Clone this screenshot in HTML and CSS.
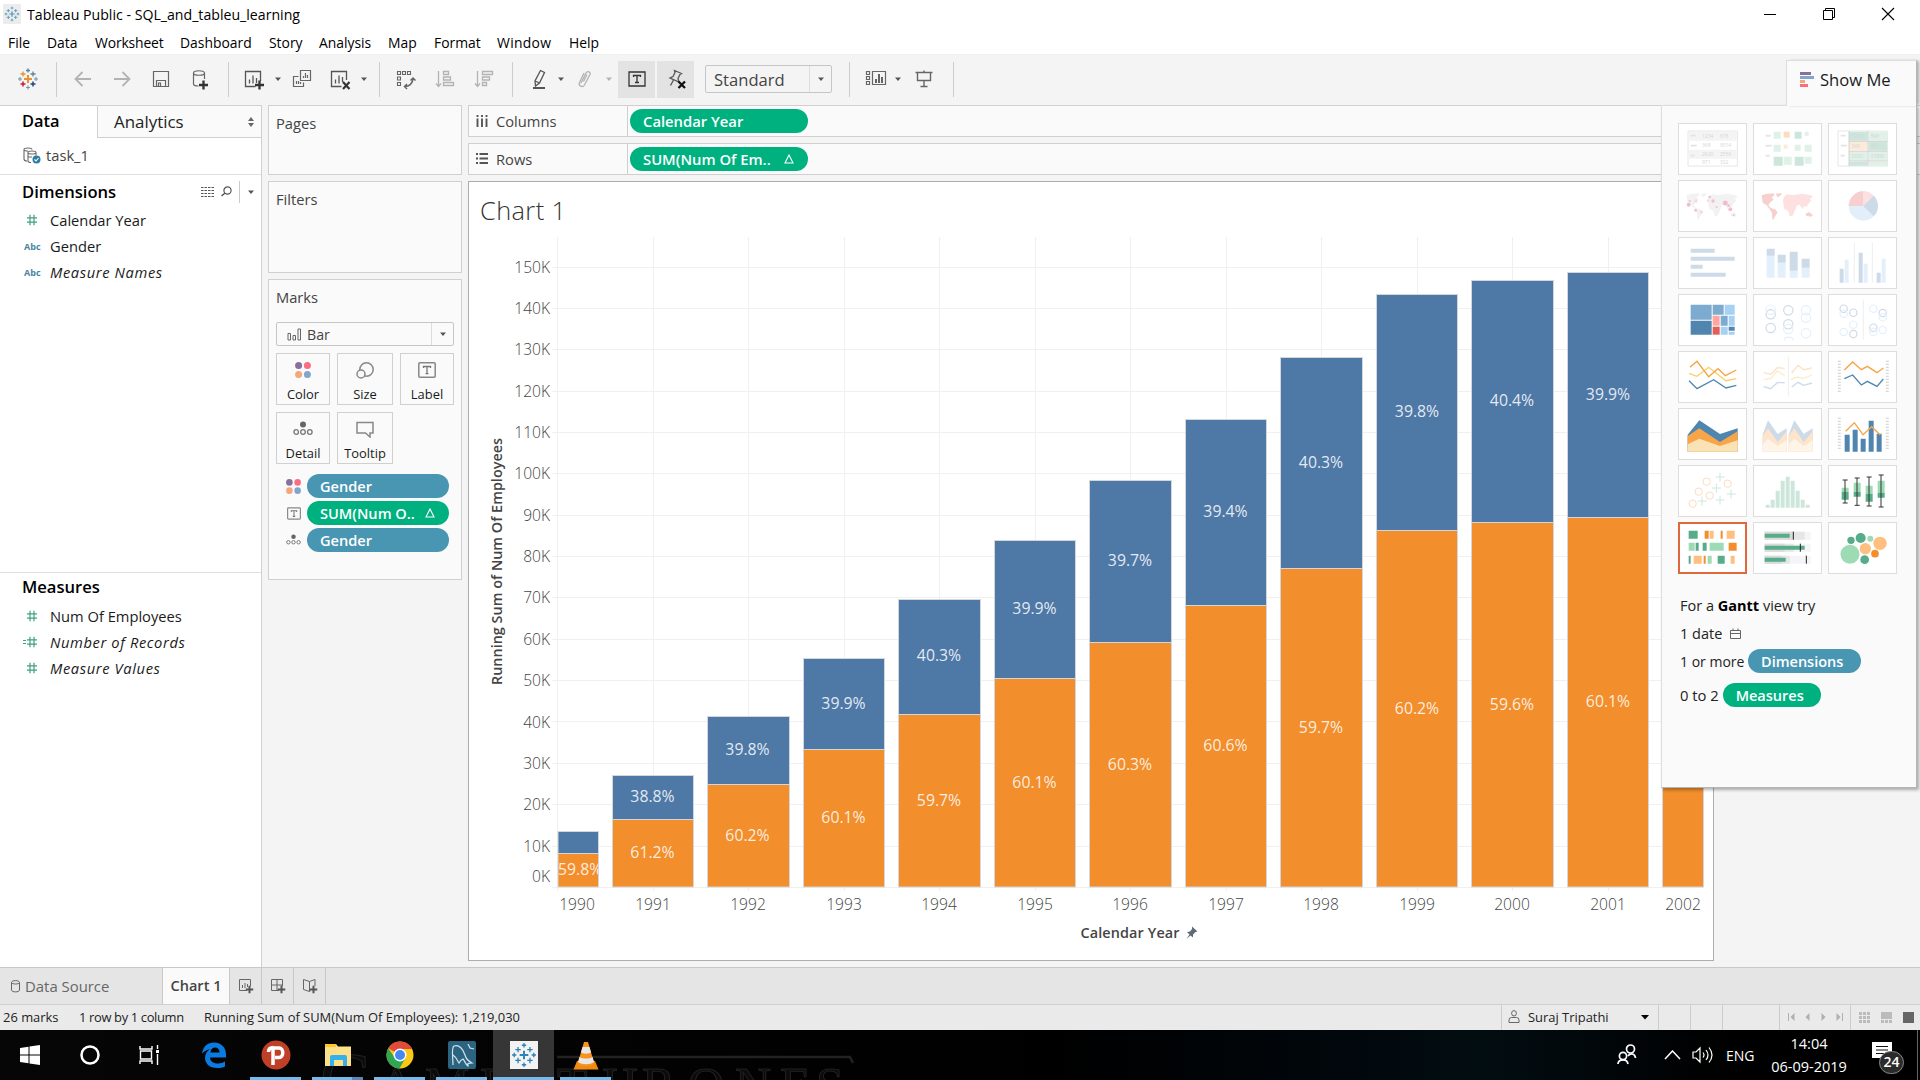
FILE: index.html
```html
<!DOCTYPE html>
<html lang="en">
<head>
<meta charset="utf-8">
<title>Tableau Public - SQL_and_tableu_learning</title>
<link rel="stylesheet" href="styles.css">
</head>
<body>
<svg class="defs" width="0" height="0" aria-hidden="true">
  <defs>
    <symbol id="dots" viewBox="0 0 16 16"><circle cx="3.6" cy="3.6" r="3.5" fill="#87709c"/><circle cx="12.4" cy="3.6" r="3.5" fill="#fa6e80"/><circle cx="3.6" cy="12.4" r="3.5" fill="#f5a67b"/><circle cx="12.4" cy="12.4" r="3.5" fill="#82a5cc"/></symbol>
    <symbol id="detail" viewBox="0 0 20 16"><circle cx="10" cy="3.5" r="3" fill="#666"/><g fill="none" stroke="#777" stroke-width="1.3"><circle cx="3.2" cy="11" r="2.3"/><circle cx="10" cy="11" r="2.3"/><circle cx="16.8" cy="11" r="2.3"/></g></symbol>
    <symbol id="label" viewBox="0 0 18 16"><rect x=".8" y=".8" width="16.4" height="14.4" rx="1" fill="none" stroke="#888" stroke-width="1.5"/><path d="M5.5 6V4.5h7V6M9 4.5v7M7.5 11.7h3" fill="none" stroke="#777" stroke-width="1.3"/></symbol>
    <symbol id="hash" viewBox="0 0 12 12"><path d="M1 3.8h10M1 8.2h10M4 .8v10.4M8 .8v10.4" stroke="#3fa27c" stroke-width="1.2"/></symbol>
    <symbol id="delta" viewBox="0 0 10 10"><path d="M5 1 9 9H1z" fill="none" stroke="#fff" stroke-width="1.1"/></symbol>
    <symbol id="caret" viewBox="0 0 8 8"><path d="M1 2.5h6L4 6z"/></symbol>
    <symbol id="plus" viewBox="0 0 8 8"><path d="M4 0v8M0 4h8" stroke-width="2"/></symbol>
    <symbol id="tableau" viewBox="0 0 24 24"><path d="M12 8v8M8 12h8" stroke-width="1.8"/><path d="M6.500 4.500v5M4 7h5M17.500 4.500v5M15 7h5M6.500 14.500v5M4 17h5M17.500 14.500v5M15 17h5M12 1v4M10 3h4M12 19v4M10 21h4M3 10v4M1 12h4M21 10v4M19 12h4" stroke-width="1.200"/></symbol>
  </defs>
</svg>

<header class="titlebar">
  <svg class="app-icon" width="18" height="20"><rect x="0" y="0" width="18" height="20" fill="#ececec"/><use href="#tableau" x="1" y="1" width="16" height="18" stroke="#4f93b5"/></svg>
  <span class="title-text">Tableau Public - SQL_and_tableu_learning</span>
  <div class="window-buttons">
    <svg width="14" height="14"><path d="M1 7.500h12" stroke="#000"/></svg>
    <svg width="14" height="14"><path d="M1.500 3.500h9v9h-9zM3.500 3.500v-2h9v9h-2" fill="none" stroke="#000"/></svg>
    <svg width="14" height="14"><path d="m1 1 12 12M13 1 1 13" stroke="#000" stroke-width="1.100"/></svg>
  </div>
</header>

<nav class="menu">
  <span class="m-file">File</span><span class="m-data">Data</span><span class="m-worksheet">Worksheet</span><span class="m-dashboard">Dashboard</span><span class="m-story">Story</span><span class="m-analysis">Analysis</span><span class="m-map">Map</span><span class="m-format">Format</span><span class="m-window">Window</span><span class="m-help">Help</span>
</nav>

<div class="toolbar">
  <svg class="ic t-logo" viewBox="0 0 24 24"><path d="M12 8v8M8 12h8" stroke="#eb912c" stroke-width="2"/><path d="M7 4.500v5M4.500 7h5" stroke="#eb912c" stroke-width="1.300"/><path d="M17 4.500v5M14.500 7h5M12 1.500v4M10 3.500h4" stroke="#59879b" stroke-width="1.300"/><path d="M7 14.500v5M4.500 17h5" stroke="#c72035" stroke-width="1.500"/><path d="M17 14.500v5M14.500 17h5" stroke="#1f457e" stroke-width="1.500"/><path d="M12 18.500v4M10 20.500h4M4 10v4M2 12h4M20 10v4M18 12h4" stroke="#7199a6" stroke-width="1.100"/></svg>
  <i class="sep s16"></i>
  <svg class="ic t-back" viewBox="0 0 24 24"><path d="M20 12H5M11.500 5 4.500 12l7 7" fill="none" stroke="#b3b3b3" stroke-width="1.800"/></svg>
  <svg class="ic g15" viewBox="0 0 24 24"><path d="M4 12h15M12.500 5l7 7-7 7" fill="none" stroke="#b3b3b3" stroke-width="1.800"/></svg>
  <svg class="ic g15" viewBox="0 0 24 24"><path d="M4.500 4.500h15v15h-15zM7.500 19.500v-6h9v6M9.500 19v-3h2v3" fill="none" stroke="#666" stroke-width="1.200"/></svg>
  <svg class="ic g15" viewBox="0 0 24 24"><path d="M16.500 12V6c0-3-11-3-11 0v11c0 1 2 2 5 2M5.500 6c0 3 11 3 11 0" fill="none" stroke="#666" stroke-width="1.200"/><path d="M15.500 13.500v9M11 18h9" stroke="#333" stroke-width="2.300"/></svg>
  <i class="sep s16"></i>
  <svg class="ic g12" viewBox="0 0 24 24"><path d="M19.500 14V4.500h-15v15h10M8.500 16.500v-4M12 16.500v-8M15.500 16v-5" fill="none" stroke="#555" stroke-width="1.300"/><path d="M18.500 13.500v9M14 18h9" stroke="#333" stroke-width="2.300"/></svg>
  <svg class="cr g9"><use href="#caret"/></svg>
  <svg class="ic g8" viewBox="0 0 24 24"><path d="M10.500 3.500h10v10h-10zM8.500 9.500h-5v10h10v-4M13.500 11V9M15.500 11V6M17.500 11V8M6.500 17v-3M8.500 17v-3M10.500 17v-2" fill="none" stroke="#666" stroke-width="1.200"/></svg>
  <svg class="ic t-clear" viewBox="0 0 24 24"><path d="M18.500 13V4.500h-15v15h10M7.500 16.500v-4M11 16.500v-8M14.500 15v-5" fill="none" stroke="#555" stroke-width="1.300"/><path d="m15 15 6.500 7M21.500 15 15 22" stroke="#333" stroke-width="2.200"/></svg>
  <svg class="cr g8"><use href="#caret"/></svg>
  <i class="sep s11"></i>
  <svg class="ic t-swap" viewBox="0 0 24 24"><path d="M4.500 4.500h3v3h-3zM9.500 4.500h3v3h-3zM14.500 4.500h3v3h-3zM4.500 10h3v3h-3zM4.500 15.500h3v3h-3z" fill="none" stroke="#666" stroke-width="1.100"/><path d="M12 19.500c4 0 8-3 8-8M17.500 13.500l2.500-2.500 2.500 2.500M14 17l-2.500 2.500L14 22" fill="none" stroke="#666" stroke-width="1.500"/></svg>
  <svg class="ic g16" viewBox="0 0 24 24"><path d="M5.500 4v15M3 16.500l2.500 3 2.500-3M10.500 4.500h5v3h-5zM10.500 10h7v3h-7zM10.500 15.500h10v3h-10z" fill="none" stroke="#b3b3b3" stroke-width="1.300"/></svg>
  <svg class="ic g15" viewBox="0 0 24 24"><path d="M5.500 4v15M3 16.500l2.500 3 2.500-3M10.500 4.500h10v3h-10zM10.500 10h7v3h-7zM10.500 15.500h4v3h-4z" fill="none" stroke="#b3b3b3" stroke-width="1.300"/></svg>
  <i class="sep s16"></i>
  <svg class="ic g14" viewBox="0 0 24 24"><path d="m13.500 3.500 4 2-5 10.500-4 3-.5-5zM8 14l4.500 2" fill="none" stroke="#555" stroke-width="1.300"/><path d="M6 21h12" stroke="#555" stroke-width="2"/></svg>
  <svg class="cr g6"><use href="#caret"/></svg>
  <svg class="ic g8" viewBox="0 0 24 24"><path d="m8 16 5-10c1.500-2.500 5-1 4 1.500L11.500 18c-2 3-6.500 1-5-2.500L11 6M10.500 14.500l3.500-7" fill="none" stroke="#b3b3b3" stroke-width="1.300"/></svg>
  <svg class="cr g8 off"><use href="#caret"/></svg>
  <div class="toggle g5"><svg width="18" height="16" viewBox="0 0 18 16"><path d="M1 1h16v14H1zM5.500 6V4.500h7V6M9 4.500v7M7 11.500h4" fill="none" stroke="#333" stroke-width="1.300"/></svg></div>
  <div class="toggle g2"><svg width="24" height="24" viewBox="0 0 24 24"><path d="m10.500 3.500 7 3-1.500 1-2 4 1 3.500-9-4 3-1.500 2-4zM9.500 13 6.500 18.500" fill="none" stroke="#555" stroke-width="1.300"/><path d="m14.500 14.500 6.500 6.500M21 14.500l-6.500 6.500" stroke="#111" stroke-width="2.300"/></svg></div>
  <div class="combo fit"><span>Standard</span><b><svg class="cr"><use href="#caret"/></svg></b></div>
  <i class="sep s17"></i>
  <svg class="ic g14" viewBox="0 0 24 24"><path d="M2.500 4.500h3v3h-3zM2.500 9.500h3v3h-3zM2.500 14.500h3v3h-3zM8.500 4.500h13v13h-13z" fill="none" stroke="#666" stroke-width="1.200"/><path d="M12 16v-4M15 16V7M18 16v-6" stroke="#555" stroke-width="1.800"/></svg>
  <svg class="cr g6"><use href="#caret"/></svg>
  <svg class="ic g10" viewBox="0 0 24 24"><path d="M3.500 5.500h17M5.500 5.500v8h13v-8M12 13.500v5.500M8.500 19.500h7M12 3.500v2" fill="none" stroke="#666" stroke-width="1.400"/></svg>
  <i class="sep s17"></i>
</div>

<main class="workspace">
  <aside class="side">
    <div class="side-tabs">
      <span class="tab-data">Data</span>
      <span class="tab-analytics">Analytics<svg width="8" height="10"><path d="M4 0l3 4H1zM4 10l3-4H1z" fill="#666"/></svg></span>
    </div>
    <div class="source">
      <svg width="18" height="17" viewBox="0 0 18 17"><path d="M1 2.500c0-2 8-2 8 0M1 2.500V12c0 1 1 2 3 2M1 2.500c0 1 2 1.500 4 1.500M5 5.500c0-2 8-2 8 0v3M5 5.500c0 2 8 2 8 0M5 5.500V14c0 1 1 1.500 3 1.500M5 10h4" fill="none" stroke="#666" stroke-width="1.100"/><circle cx="13.500" cy="12.500" r="4" fill="#2d7ca3"/><path d="m11.500 12.500 1.500 1.500 2.500-3" fill="none" stroke="#fff" stroke-width="1.100"/></svg>
      <span>task_1</span>
    </div>
    <section class="dims">
      <div class="side-head"><h2>Dimensions</h2>
        <svg class="h-grid" width="13" height="10"><path d="M0 .5h13M0 3.500h13M0 6.500h13M0 9.500h13" stroke="#555" stroke-dasharray="2.500 1"/></svg>
        <svg class="h-find" width="11" height="11"><circle cx="6.500" cy="4.500" r="3.600" fill="none" stroke="#555" stroke-width="1.200"/><path d="M4 7 .5 10" stroke="#555" stroke-width="1.500"/></svg>
        <i></i><svg class="cr"><use href="#caret"/></svg>
      </div>
      <div class="field"><svg width="12" height="12"><use href="#hash"/></svg>Calendar Year</div>
      <div class="field"><small>Abc</small>Gender</div>
      <div class="field it"><small>Abc</small>Measure Names</div>
    </section>
    <section class="meas">
      <div class="side-head"><h2>Measures</h2></div>
      <div class="field"><svg width="12" height="12"><use href="#hash"/></svg>Num Of Employees</div>
      <div class="field it eq"><svg width="15" height="12"><use href="#hash" x="3" width="12" height="12"/><path d="M0 4.500h3M0 7.500h3" stroke="#3fa27c"/></svg>Number of Records</div>
      <div class="field it"><svg width="12" height="12"><use href="#hash"/></svg>Measure Values</div>
    </section>
  </aside>

  <div class="cards">
    <section class="card pages"><h3>Pages</h3></section>
    <section class="card filters"><h3>Filters</h3></section>
    <section class="card marks"><h3>Marks</h3>
      <div class="combo mark-type"><svg width="14" height="13"><path d="M1 5.500h2.500V12H1zM6 7.500h2.500V12H6zM11 1h2.500v11H11z" fill="none" stroke="#666"/></svg><span>Bar</span><b><svg class="cr"><use href="#caret"/></svg></b></div>
      <div class="mark-grid">
        <div><svg width="16" height="16"><use href="#dots"/></svg>Color</div>
        <div><svg width="18" height="17" viewBox="0 0 18 17" fill="#fafafa" stroke="#888" stroke-width="1.500"><circle cx="10.500" cy="7.500" r="6.700"/><circle cx="5" cy="12" r="4"/></svg>Size</div>
        <div><svg width="18" height="16"><use href="#label"/></svg>Label</div>
        <div><svg width="20" height="16"><use href="#detail"/></svg>Detail</div>
        <div><svg width="18" height="17"><path d="M1 1.500h16v10.500h-3v4l-4.500-4H1z" fill="none" stroke="#888" stroke-width="1.500"/></svg>Tooltip</div>
      </div>
      <div class="encodings">
        <div><svg width="15" height="15"><use href="#dots"/></svg><span class="pill blue">Gender</span></div>
        <div><svg width="14" height="13"><use href="#label"/></svg><span class="pill green">SUM(Num O..<svg width="10" height="10"><use href="#delta"/></svg></span></div>
        <div><svg width="15" height="12"><use href="#detail"/></svg><span class="pill blue">Gender</span></div>
      </div>
    </section>
  </div>

  <div class="canvas">
    <div class="shelf"><div class="shelf-name"><svg width="12" height="13"><path d="M1.500 0v2M6 0v2M10.500 0v2M1.500 3.500V12M6 3.500V12M10.500 3.500V12" stroke="#555" stroke-width="1.900"/></svg>Columns</div><span class="pill green">Calendar Year</span></div>
    <div class="shelf"><div class="shelf-name"><svg width="12" height="12"><path d="M0 1h2M0 5.500h2M0 10h2M3.500 1H12M3.500 5.500H12M3.500 10H12" stroke="#555" stroke-width="1.900"/></svg>Rows</div><span class="pill green">SUM(Num Of Em..<svg width="10" height="10"><use href="#delta"/></svg></span></div>
    <div class="view">
      <svg class="chart" width="1244" height="778" viewBox="469 182 1244 778">
        <text class="chart-title" x="480" y="220" textLength="86">Chart 1</text>
        <path class="grid" d="M552 267.500H1703M552 308.500H1703M552 349.500H1703M552 391.500H1703M552 432.500H1703M552 473.500H1703M552 515.500H1703M552 556.500H1703M552 597.500H1703M552 639.500H1703M552 680.500H1703M552 721.500H1703M552 763.500H1703M552 804.500H1703M552 846.500H1703M552 887.500H1703M557.500 237V891M653.500 237V891M748.500 237V891M844.500 237V891M939.500 237V891M1035.500 237V891M1130.500 237V891M1226.500 237V891M1321.500 237V891M1417.500 237V891M1512.500 237V891M1608.500 237V891"/>
        <g class="bars male">
          <rect x="558" y="831.500" width="40.500" height="22"/><rect x="612.500" y="775.500" width="81" height="44"/><rect x="707.500" y="716.500" width="82" height="68"/><rect x="803.500" y="658.500" width="81" height="91"/><rect x="898.500" y="599.500" width="82" height="115"/><rect x="994.500" y="540.500" width="81" height="138"/><rect x="1089.500" y="480.500" width="82" height="162"/><rect x="1185.500" y="419.500" width="81" height="186"/><rect x="1280.500" y="357.500" width="82" height="211"/><rect x="1376.500" y="294.500" width="81" height="236"/><rect x="1471.500" y="280.500" width="82" height="242"/><rect x="1567.500" y="272.500" width="81" height="245"/>
        </g>
        <g class="bars female">
          <rect x="558" y="853.500" width="40.500" height="33.500"/><rect x="612.500" y="819.500" width="81" height="67.500"/><rect x="707.500" y="784.500" width="82" height="102.500"/><rect x="803.500" y="749.500" width="81" height="137.500"/><rect x="898.500" y="714.500" width="82" height="172.500"/><rect x="994.500" y="678.500" width="81" height="208.500"/><rect x="1089.500" y="642.500" width="82" height="244.500"/><rect x="1185.500" y="605.500" width="81" height="281.500"/><rect x="1280.500" y="568.500" width="82" height="318.500"/><rect x="1376.500" y="530.500" width="81" height="356.500"/><rect x="1471.500" y="522.500" width="82" height="364.500"/><rect x="1567.500" y="517.500" width="81" height="369.500"/><rect x="1662.500" y="515.500" width="41" height="371.500"/>
        </g>
        <svg x="558" y="854" width="40" height="33" viewBox="558 854 40 33"><text class="pct start" x="558" y="875">59.8%</text></svg>
        <g class="pct">
          <text x="652.500" y="802">38.8%</text><text x="652.500" y="858">61.2%</text>
          <text x="747.500" y="755">39.8%</text><text x="747.500" y="841">60.2%</text>
          <text x="843.500" y="709">39.9%</text><text x="843.500" y="823">60.1%</text>
          <text x="939" y="661">40.3%</text><text x="939" y="806">59.7%</text>
          <text x="1034.500" y="614">39.9%</text><text x="1034.500" y="788">60.1%</text>
          <text x="1130" y="566">39.7%</text><text x="1130" y="770">60.3%</text>
          <text x="1225.500" y="517">39.4%</text><text x="1225.500" y="751">60.6%</text>
          <text x="1321" y="468">40.3%</text><text x="1321" y="733">59.7%</text>
          <text x="1417" y="417">39.8%</text><text x="1417" y="714">60.2%</text>
          <text x="1512" y="406">40.4%</text><text x="1512" y="710">59.6%</text>
          <text x="1608" y="400">39.9%</text><text x="1608" y="707">60.1%</text>
        </g>
        <g class="axis right">
          <text x="550" y="273">150K</text><text x="550" y="314">140K</text><text x="550" y="355">130K</text><text x="550" y="397">120K</text><text x="550" y="438">110K</text><text x="550" y="479">100K</text><text x="550" y="521">90K</text><text x="550" y="562">80K</text><text x="550" y="603">70K</text><text x="550" y="645">60K</text><text x="550" y="686">50K</text><text x="550" y="728">40K</text><text x="550" y="769">30K</text><text x="550" y="810">20K</text><text x="550" y="852">10K</text><text x="550" y="882">0K</text>
        </g>
        <g class="axis">
          <text x="577" y="910">1990</text><text x="653" y="910">1991</text><text x="748" y="910">1992</text><text x="844" y="910">1993</text><text x="939" y="910">1994</text><text x="1035" y="910">1995</text><text x="1130" y="910">1996</text><text x="1226" y="910">1997</text><text x="1321" y="910">1998</text><text x="1417" y="910">1999</text><text x="1512" y="910">2000</text><text x="1608" y="910">2001</text><text x="1683" y="910">2002</text>
        </g>
        <text class="axis-title" x="1080.500" y="937.500" textLength="99">Calendar Year</text>
        <text class="axis-title" transform="translate(502 685) rotate(-90)" textLength="247">Running Sum of Num Of Employees</text>
        <path d="m1192 926.500 5.500 5-2 .5-2.500 2.500v3l-2.500-2-4 3.500 3-4.500-2.500-2.500 3-.5 2-2.500z" fill="#5e6a78"/>
      </svg>
    </div>
  </div>

  <aside class="showme">
    <div class="showme-tab"><svg width="14" height="16"><path d="M0 0h11v3H0z" fill="#87709c"/><path d="M0 4h14v3H0z" fill="#82a5cc"/><path d="M0 8h5v3H0z" fill="#f5a67b"/><path d="M0 12h8v3H0z" fill="#fa6e80"/></svg>Show Me</div>
    <div class="thumbs">
      <svg viewBox="88 223 201 150"><path d="M115 244h148v105H115z" fill="#fff" stroke="#e6e6e6" stroke-width="3"/><path d="M117 246h144v27H117zM117 300h144v27H117z" fill="#f4f4f4"/><path d="M123 258h15M123 288h18M123 318h12" stroke="#e3e3e3" stroke-width="5"/><g class="tiny"><text x="157" y="265">1234</text><text x="210" y="265">678</text><text x="157" y="292">368</text><text x="210" y="292">3014</text><text x="157" y="319">2620</text><text x="210" y="319">2556</text><text x="157" y="344">971</text><text x="210" y="344">322</text></g></svg>
      <svg viewBox="313 223 201 150"><path d="M348 258h15M348 288h18M348 318h12" stroke="#e6e6e6" stroke-width="6"/><path d="M372 246h21v21h-21zM465 246h12v12h-12zM372 285h21v21h-21zM435 285h18v18h-18zM465 285h21v21h-21zM402 321h24v24h-24zM465 321h21v21h-21z" fill="#e0f1e8"/><path d="M435 246h21v21h-21zM372 321h27v27h-27zM435 321h27v27h-27z" fill="#cde6dc"/><path d="M402 246h18v18h-18z" fill="#fddcc0"/><path d="M402 285h12v12h-12z" fill="#feead8"/></svg>
      <svg viewBox="538 223 201 150"><path d="M565 244h148v105H565z" fill="#fff" stroke="#e6e6e6" stroke-width="3"/><path d="M598 246h56v27h-56zM657 276h55v27h-55zM598 336h56v12h-56z" fill="#cde6dc"/><path d="M657 246h55v27h-55zM598 306h56v27h-56zM657 306h55v27h-55zM657 336h55v12h-55z" fill="#e0f1e8"/><path d="M598 276h56v27h-56z" fill="#feead8"/><path d="M598 244v105M655 244v105M598 275h115M598 305h115M598 334h115" stroke="#ccc" stroke-width="2.500"/><path d="M573 258h15M573 288h18M573 318h12" stroke="#e3e3e3" stroke-width="5"/><g class="tiny"><text x="605" y="265">1234</text><text x="663" y="265">546</text><text x="605" y="295">368</text><text x="663" y="295">340</text><text x="605" y="325">2620</text><text x="663" y="325">53890</text></g></svg>

      <svg viewBox="88 394 201 150"><path d="m111 437 12-4 24-2 3 6-9 6 6 7-10 8-6 9 7 8 13 4 8 9-7 11-6 11-3-2-1-17-6-11-10-13-12-8-2-14zM153 432l19-2-6 10-8 2zM175 456l2-14 10-8 20 2 25-4 25 5 8 4-8 5 2 8-8 8-5 10-7-3-6 9-8-13-8 2-3 8-5 12-6 13-8-1-4-15-12-6-2-10zM243 492l10-5 8 10-6 4-11-3z" fill="#f2f2f2"/><g fill="#eebfc8"><circle cx="117" cy="465" r="6"/><circle cx="190" cy="454" r="5"/><circle cx="227" cy="460" r="7.500"/><circle cx="242" cy="479" r="6"/><circle cx="120" cy="454" r="3"/><circle cx="138" cy="482" r="4"/><circle cx="180" cy="442" r="4"/><circle cx="201" cy="472" r="3"/><circle cx="237" cy="468" r="4"/><circle cx="252" cy="497" r="3"/></g><g fill="#fdd9da"><circle cx="139" cy="454" r="5"/><circle cx="155" cy="487" r="5"/><circle cx="175" cy="453" r="4"/></g></svg>
      <svg viewBox="313 394 201 150"><path d="m336 437 12-4 24-2 3 6-9 6 6 7-10 8-6 9 7 8 13 4 8 9-7 11-6 11-3-2-1-17-6-11-10-13-12-8-2-14zM378 432l19-2-6 10-8 2zM468 492l10-5 12 10-6 4-15-3z" fill="#f7cfcd"/><path d="m400 456 2-14 10-8 20 2 25-4 25 5 8 4-8 5 2 8-8 8-5 10-7-3-6 9-8-13-8 2-3 8-5 12-6 13-8-1-4-15-12-6-2-10z" fill="#fee0e0"/></svg>
      <svg viewBox="538 394 201 150"><circle cx="641" cy="469" r="44" fill="#e2effa"/><path d="M641 469v-44a44 44 0 0 0-44 44z" fill="#f7cfcf"/><path d="M641 469v-44a44 44 0 0 1 31 13z" fill="#fee0e0"/><path d="m641 469 31-31a44 44 0 0 1 0 62z" fill="#cddae8"/></svg>

      <svg viewBox="88 565 201 150"><path d="M123 597h72v12h-72zM123 621h132v12H123zM123 645h36v12h-36zM123 669h105v12H123z" fill="#cddae8"/></svg>
      <svg viewBox="313 565 201 150"><path d="M351 618h24v66h-24zM384 639h24v45h-24zM420 663h24v21h-24zM456 654h24v30h-24z" fill="#e3f0fb"/><path d="M351 597h24v21h-24zM384 615h24v24h-24zM420 606h24v57h-24zM456 627h24v27h-24z" fill="#cddae8"/></svg>
      <svg viewBox="538 565 201 150"><path d="M614 579v120M668 579v120" stroke="#eee" stroke-width="3"/><path d="M585 630h12v69h-12zM642 642h12v57h-12zM696 627h12v72h-12z" fill="#e3f0fb"/><path d="M570 657h12v42h-12zM627 609h12v90h-12zM681 669h12v30h-12z" fill="#cddae8"/></svg>

      <svg viewBox="88 736 201 150"><path d="M123 765h63v45h-63zM189 765h33v30h-33zM213 798h21v30h-21z" fill="#7dabd0"/><path d="M123 813h63v42h-63zM237 831h18v12h-18z" fill="#5085af"/><path d="M225 765h30v30h-30zM237 798h18v30h-18zM213 831h21v24h-21zM237 846h18v9h-18z" fill="#a6d1f2"/><path d="M189 798h21v30h-21z" fill="#fea6a1"/><path d="M189 831h21v24h-21z" fill="#e06058"/></svg>
      <svg viewBox="313 736 201 150" fill="none" stroke-width="3.500"><g stroke="#cddae8"><circle cx="363" cy="794" r="14"/><circle cx="416" cy="782" r="14"/><circle cx="363" cy="835" r="14"/><circle cx="416" cy="824" r="14"/></g><g stroke="#e3f0fb"><circle cx="363" cy="780" r="14"/><circle cx="469" cy="782" r="14"/><circle cx="469" cy="804" r="14"/><circle cx="416" cy="838" r="14"/><circle cx="469" cy="851" r="14"/><path d="M403 873c2-14 25-14 28 0"/></g></svg>
      <svg viewBox="538 736 201 150" fill="none" stroke-width="3.500"><path d="M641 750v120" stroke="#eee" stroke-width="3"/><g stroke="#cddae8"><circle cx="582" cy="777" r="11"/><circle cx="611" cy="789" r="11"/><circle cx="699" cy="790" r="11"/><circle cx="611" cy="853" r="11"/><circle cx="671" cy="834" r="11"/></g><g stroke="#e3f0fb"><circle cx="582" cy="792" r="11"/><circle cx="671" cy="777" r="11"/><circle cx="699" cy="803" r="11"/><circle cx="582" cy="847" r="11"/><circle cx="611" cy="825" r="11"/><circle cx="671" cy="847" r="11"/><circle cx="699" cy="841" r="11"/></g></svg>

      <svg viewBox="88 97 201 150" fill="none" stroke-width="4"><path d="m118 161 24 9 35-27 52 40 31-6" stroke="#f6d06f"/><path d="m121 143 21-18 35 46 28-24 22 21 33-17" stroke="#f8a341"/><path d="m118 183 24 24 50-27 37 25 31-8" stroke="#4f86b0"/></svg>
      <svg viewBox="313 97 201 150" fill="none" stroke-width="4"><path d="M416 111v120" stroke="#eee" stroke-width="3"/><path d="m342 159 22 5 19-20 22 2M426 160l19-23 17 13 25-5" stroke="#fde2c8"/><path d="m342 180 22-4 19-22 22 14M424 179l19-7 17 5 27-11" stroke="#fdecc8"/><path d="m342 201 21 6 20-18h22M426 202l19-14 17 9 25-7" stroke="#cddae8"/></svg>
      <svg viewBox="538 97 201 150" fill="none" stroke-width="4"><path d="M569 123v93M713 123v93" stroke="#ccc" stroke-width="9" stroke-dasharray="3 6"/><path d="m584 151 25-24 26 23 18-10 29 19 19-14" stroke="#f8a341"/><path d="m584 177 25-11 26 30 18-11 29 15 19-22" stroke="#4f86b0"/></svg>

      <svg viewBox="88 268 201 150"><path d="m114 345 35-43 62 41 53-17v70H114z" fill="#4f86b0"/><path d="m114 349 35-23 62 41 53-32v61H114z" fill="#f8a54a"/><path d="m114 374 35-17 62 22 53-17v34H114z" fill="#f9e2b5"/></svg>
      <svg viewBox="313 268 201 150"><path d="m339 345 16-43 29 41 27-17v70h-72zM417 345l17-43 28 41 27-17v70h-72z" fill="#cddae8"/><path d="m339 349 16-23 29 41 27-32v61h-72zM417 349l17-23 28 41 27-32v61h-72z" fill="#fde4ca"/><path d="m339 374 16-17 29 22 27-17v34h-72zM417 374l17-17 28 22 27-17v34h-72z" fill="#fef4e8"/></svg>
      <svg viewBox="538 268 201 150"><path d="M569 294v93M713 294v93" stroke="#ccc" stroke-width="9" stroke-dasharray="3 6"/><path d="M585 345h15v51h-15zM609 330h15v66h-15zM633 357h15v39h-15zM657 303h15v93h-15zM681 342h15v54h-15z" fill="#5085af"/><path d="m588 335 26-26 26 36 26-24 26 25" fill="none" stroke="#f8a54a" stroke-width="4"/></svg>

      <svg viewBox="88 439 201 150" fill="none" stroke-width="3"><g stroke="#fddcc0"><circle cx="171" cy="486" r="11"/><circle cx="234" cy="492" r="11"/><circle cx="147" cy="516" r="11"/><circle cx="180" cy="528" r="11"/><circle cx="129" cy="552" r="11"/></g><path d="M211 459v27M198 472h27M200 492v27M187 505h27M244 510v27M231 523h27M211 528v27M198 541h27M157 531v27M144 544h27" stroke="#cde6dc"/></svg>
      <svg viewBox="313 439 201 150"><path d="M348 555h12v9h-12zM363 540h12v24h-12zM378 513h12v51h-12zM393 483h12v81h-12zM408 471h12v93h-12zM423 483h12v81h-12zM438 513h12v51h-12zM453 540h12v24h-12zM468 555h12v9h-12z" fill="#cde6dc"/></svg>
      <svg viewBox="538 439 201 150"><path d="M576 504h21v12h-21zM612 489h21v27h-21zM648 498h21v24h-21zM684 483h21v36h-21z" fill="#9ddbb5"/><path d="M576 516h21v24h-21zM612 516h21v15h-21zM648 522h21v24h-21zM684 519h21v15h-21z" fill="#57ad89"/><path d="M586 481v69M579 481h15M579 550h15M622 475v82M615 475h15M615 557h15M658 472v87M651 472h15M651 559h15M694 466v96M687 466h15M687 562h15" stroke="#333" stroke-width="3"/></svg>

      <svg class="selected" viewBox="91 613 195 144"><path d="M117 633h27v24h-27zM138 669h9v24h-9zM159 669h12v24h-12zM117 708h6v24h-6zM204 708h21v24h-21z" fill="#57ad89"/><path d="M117 669h18v24h-18zM180 669h42v24h-42zM174 708h12v24h-12z" fill="#9ddbb5"/><path d="M165 633h12v24h-12zM213 633h6v24h-6zM237 669h24v24h-24zM162 708h6v24h-6z" fill="#f28e2b"/><path d="M180 633h12v24h-12zM231 633h24v24h-24zM132 708h24v24h-24zM243 708h12v24h-12z" fill="#febf80"/></svg>
      <svg viewBox="313 610 201 150"><path d="M345 636h138v24H345zM345 672h138v24H345zM345 708h138v24H345z" fill="#f4f5f8"/><path d="M345 636h120v24H345zM345 672h87v24h-87zM345 708h75v24h-75z" fill="#e6e6e6"/><path d="M345 636h87v24h-87zM345 672h60v24h-60zM345 708h51v24h-51z" fill="#dadada"/><path d="M345 642h75v12h-75zM345 678h120v12H345zM345 714h63v12h-63z" fill="#57ad89"/><path d="M431 636v24M452 672v24M470 708v24" stroke="#222" stroke-width="3"/></svg>
      <svg viewBox="538 610 201 150"><circle cx="601" cy="704" r="28.500" fill="#9ddbb5"/><circle cx="662" cy="657" r="9" fill="#9ddbb5"/><g fill="#57ad89"><circle cx="604" cy="662" r="11"/><circle cx="633" cy="655" r="15"/><circle cx="645" cy="720" r="13"/></g><g fill="#febf80"><circle cx="647" cy="687" r="17"/><circle cx="691" cy="671" r="20"/></g><circle cx="676" cy="702" r="11.500" fill="#f28e2b"/></svg>
    </div>
    <div class="hint">
      <p class="h-title">For a <b>Gantt</b> view try</p>
      <p class="h-date">1 date <svg width="11" height="11"><path d="M.5 2.500h10v8H.5zM.5 5.500h10M3 .5v2M8 .5v2" fill="none" stroke="#666"/></svg></p>
      <p class="h-row">1 or more <span class="pill blue">Dimensions</span></p>
      <p class="h-row last">0 to 2 <span class="pill green">Measures</span></p>
    </div>
  </aside>
</main>

<div class="sheets">
  <span class="sheet-source"><svg width="9" height="13"><path d="M.5 2.500c0-2.500 8-2.500 8 0v7.500c0 2.500-8 2.500-8 0zM.5 2.500c0 2 8 2 8 0" fill="none" stroke="#666"/></svg>Data Source</span>
  <span class="sheet-active">Chart 1</span>
  <span class="sheet-new"><svg width="16" height="16"><path d="M12.500 8V1.500H1.500v11H9M4.500 10V7M7 10V5M9.500 9V6" fill="none" stroke="#666"/><use href="#plus" x="7.500" y="7.500" width="8" height="8" stroke="#555"/></svg></span>
  <span class="sheet-new"><svg width="16" height="16"><path d="M12.500 8V1.500H1.500v11H9M1.500 7h11M7 1.500v11" fill="none" stroke="#666"/><use href="#plus" x="7.500" y="7.500" width="8" height="8" stroke="#555"/></svg></span>
  <span class="sheet-new"><svg width="16" height="16"><path d="M13 8V1.500L7.500 3.500 1.500 1.500v10l6 2 1-.5M7.500 3.500v10" fill="none" stroke="#666"/><use href="#plus" x="7.500" y="7.500" width="8" height="8" stroke="#555"/></svg></span>
</div>

<div class="status">
  <span class="st-marks">26 marks</span><span class="st-rows">1 row by 1 column</span><span class="st-sum">Running Sum of SUM(Num Of Employees): 1,219,030</span>
  <div class="st-user"><svg width="12" height="14"><path d="M6 .6a2.400 2.700 0 1 1 0 5.400 2.400 2.700 0 1 1 0-5.400zM1 12.500V10q0-2.500 2.500-2.500h5Q11 7.500 11 10v2.500z" fill="none" stroke="#666"/></svg><span>Suraj Tripathi</span><svg class="user-caret" width="8" height="5"><path d="M0 0h8L4 4.500z"/></svg></div>
  <div class="st-cell"></div><div class="st-cell"></div><div class="st-cell wide"></div>
  <div class="st-nav"><svg width="56" height="8" fill="#b0b0b0"><path d="M0 0h1v8H0zM6.500 0v8l-4-4zM21.500 0v8l-4-4zM33.500 0v8l4-4zM48.500 0v8l4-4zM54 0h1v8h-1z"/></svg></div>
  <div class="st-modes"><svg width="56" height="11"><path d="M0 0h3v3H0zM4 0h3v3H4zM8 0h3v3H8zM0 4h3v3H0zM4 4h3v3H4zM8 4h3v3H8zM0 8h3v3H0zM4 8h3v3H4zM8 8h3v3H8zM22 0h11v7H22zM22 8h3v3h-3zM26 8h3v3h-3zM30 8h3v3h-3z" fill="#bbb"/><path d="M44 0h11v11H44z" fill="#666"/></svg></div>
</div>

<footer class="taskbar">
  <svg class="wallpaper" width="1920" height="50" aria-hidden="true">
    <path d="M557 27h293l3 6" fill="none" stroke="#222" stroke-width="2.500"/>
    <g class="engraved"><text class="big" x="320" y="74">G</text><text x="379" y="72">A</text><text x="425" y="72">M</text><text x="480" y="72">E</text><text x="557" y="72">T</text><text x="602" y="72">H</text><text x="642" y="72">R</text><text x="688" y="72">O</text><text x="735" y="72">N</text><text x="780" y="72">E</text><text x="816" y="72">S</text></g>
  </svg>
  <div class="app"><svg width="20" height="20"><path d="M0 3l8.500-1.200v7.700H0zM9.500 1.600 20 0v9.500H9.500zM0 10.500h8.500v7.700L0 17zM9.500 10.500H20V20L9.500 18.400z" fill="#fff"/></svg></div>
  <div class="app"><svg width="22" height="22"><circle cx="11" cy="11" r="8.500" fill="none" stroke="#fff" stroke-width="2.500"/></svg></div>
  <div class="app"><svg width="22" height="20"><path d="M1 1v3h12V1M1 19v-3h12v3M1.500 6h11v8h-11zM18.500 0v4M18.500 9v11" fill="none" stroke="#fff" stroke-width="1.400"/><path d="M17 5h3v3h-3z" fill="#fff"/></svg></div>
  <div class="app edge"><svg width="26" height="26" viewBox="0 0 26 26"><path d="M1 12C2 4 7 .5 13 .5c8 0 12 6 12 12v3H9c0 4 4 6 8 6 3 0 5-1 7-2v5c-2 1-5 1.500-8 1.500-8 0-12-5-12-10 0-4 2-7 5-9-4 1-7 3-8 5zM9.500 10.500h9c0-3-1.500-5-4.500-5s-4.500 3-4.500 5z" fill="#0a7be0"/></svg></div>
  <div class="app open"><svg width="30" height="30"><circle cx="15" cy="15" r="14.500" fill="#c03f27"/><path d="M12 25V8h6c5 0 5 9.500 0 9.500h-4M7.500 12c0-3 2-4.500 5-4.500" fill="none" stroke="#fff" stroke-width="3.500"/></svg></div>
  <div class="app open multi"><svg width="28" height="26"><path d="M1 2h11l2 2.500h13V24H1z" fill="#ffe08a"/><path d="M1 2h11v3H1z" fill="#ffc72e"/><path d="M6 24v-9q0-2 2-2h13q2 0 2 2v9h-4v-6H10v6z" fill="#33b1e8"/></svg></div>
  <div class="app open"><svg width="28" height="28" viewBox="0 0 28 28"><circle cx="14" cy="14" r="13.500" fill="#fbc816"/><path d="M14 14 2.300 7.200A13.500 13.500 0 0 1 25.700 7.200L26 8H14z" fill="#e24a3b"/><path d="M2.300 7.200A13.500 13.500 0 0 0 13.500 27.500L19.500 17 9 17z" fill="#2ea653"/><circle cx="14" cy="14" r="6.500" fill="#fff"/><circle cx="14" cy="14" r="5" fill="#4587f3"/></svg></div>
  <div class="app open last"><svg width="28" height="28"><rect width="28" height="28" rx="2" fill="#2a6480"/><path d="M5 24C5 16 3 7 6 5c5-2 9 3 11 9 1 4 3 6 7 8l-4 .5V25c-3-2-3-5-5-7-2 1-3 2-4 4-2-3-3-6-6-8M20 3l2 4 4 1" fill="none" stroke="#d5e3ea" stroke-width="1.200"/></svg></div>
  <div class="app open active"><svg width="28" height="28"><rect width="28" height="28" fill="#f3f3f3"/><use href="#tableau" x="1" y="1" width="26" height="26" stroke="#2e82b5"/></svg></div>
  <div class="app open"><svg width="26" height="29" viewBox="0 0 26 29"><path d="M4 20h18l3.500 8.500H.5z" fill="#f28a10"/><path d="M11 1h4l6.500 22c-3 3-14 3-17 0z" fill="#f7931e"/><path d="M9.600 6h6.800l1.700 5.500c-2 1.500-8 1.500-10.200 0zM6.500 16c3 2 10 2 13 0l1.500 5c-4 3-12 3-16 0z" fill="#e8e8e8"/></svg></div>
  <div class="tray">
    <svg class="people" width="20" height="22"><g fill="none" stroke="#fff" stroke-width="1.700"><circle cx="13.500" cy="5" r="4"/><circle cx="6" cy="12" r="3.600"/><path d="M1 20c0-5 9-6 10 0M11 12c2-3 7-3 7.500 2"/></g></svg>
    <svg class="chev" width="17" height="10"><path d="m1 9 7.500-8L16 9" fill="none" stroke="#fff" stroke-width="1.500"/></svg>
    <svg class="vol" width="22" height="18"><path d="M1 6h3l4-4v14l-4-4H1zM11 6.500q2 2.500 0 5M14 4q4 5 0 10M17 1.500q6 7.500 0 15" fill="none" stroke="#fff" stroke-width="1.200"/></svg>
    <span class="lang">ENG</span>
    <div class="clock"><span>14:04</span><span>06-09-2019</span></div>
    <div class="notes"><svg width="20" height="20"><path d="M0 0h20v16h-8l-4 4v-4H0z" fill="#fff"/><path d="M4 4.500h12M4 8h12M4 11.500h12" stroke="#111"/></svg><span>24</span></div>
  </div>
</footer>
</body>
</html>
```
FILE: styles.css
```css
* { box-sizing: border-box; }
body { margin: 0; width: 1920px; height: 1080px; overflow: hidden; display: flex; flex-direction: column; background: #f4f4f4; font-family: "Open Sans", "Noto Sans", sans-serif; font-size: 14.7px; color: #1a1a1a; white-space: nowrap; }
svg { display: block; flex: none; }
.defs { position: absolute; }
h2, h3, p { margin: 0; font-weight: 400; }

.titlebar { height: 28px; background: #fff; display: flex; align-items: center; padding-left: 3px; }
.title-text { margin-left: 6px; font-size: 14.15px; color: #000; }
.window-buttons { margin-left: auto; display: flex; gap: 45px; padding-right: 25px; }
.menu { height: 26px; background: #fff; display: flex; align-items: center; font-size: 13.9px; color: #000; padding: 2px 0 0 8px; }
.menu span { flex: none; }
.m-file { width: 39px; }
.m-data { width: 48px; }
.m-worksheet { width: 85px; letter-spacing: -.15px; }
.m-dashboard { width: 89px; }
.m-story { width: 50px; }
.m-analysis { width: 69px; }
.m-map { width: 46px; }
.m-format { width: 63px; }
.m-window { width: 72px; letter-spacing: .3px; }

.toolbar { height: 51px; display: flex; align-items: center; border-top: 1px solid #f0f0f0; padding-bottom: 2px; }
.ic { width: 24px; height: 24px; }
.cr { width: 8px; height: 8px; fill: #555; }
.cr.off { fill: #b3b3b3; }
.sep { width: 1px; height: 35px; background: #ccc; }
.t-logo { margin-left: 16px; }
.t-back, .t-clear, .g14 { margin-left: 14px; }
.t-swap { margin-left: 13px; }
.g2 { margin-left: 2px; }
.g5 { margin-left: 5px; }
.g6 { margin-left: 6px; }
.g8 { margin-left: 8px; }
.g9 { margin-left: 9px; }
.g10 { margin-left: 10px; }
.s11 { margin-left: 11px; }
.g12 { margin-left: 12px; }
.g15 { margin-left: 15px; }
.g16, .s16 { margin-left: 16px; }
.s17 { margin-left: 17px; }
.toggle { width: 37px; height: 37px; background: #e3e3e3; display: flex; align-items: center; justify-content: center; }
.combo { display: flex; align-items: center; border: 1px solid #c6c6c6; border-radius: 2px; background: #fafafa; color: #444; }
.combo b { margin-left: auto; align-self: stretch; display: flex; align-items: center; justify-content: center; width: 22px; border-left: 1px solid #ddd; }
.fit { margin-left: 11px; width: 127px; height: 28px; background: #f4f4f4; font-size: 16.6px; padding-left: 8px; }

.workspace { height: 862px; display: flex; position: relative; }
.side { width: 262px; background: #fff; border-right: 1px solid #d0d0d0; border-top: 1px solid #d0d0d0; }
.side-tabs { display: flex; height: 32px; font-size: 16.9px; color: #000; }
.tab-data { width: 97px; padding: 3px 0 0 22px; font-weight: 600; font-size: 16.4px; }
.tab-analytics { flex: 1; display: flex; align-items: center; justify-content: space-between; padding: 0 6px 0 16px; background: #fafafa; border-left: 1px solid #d0d0d0; border-bottom: 1px solid #d0d0d0; color: #222; }
.source { height: 37px; display: flex; align-items: center; padding: 0 0 2px 23px; gap: 5px; border-bottom: 1px solid #e0e0e0; color: #444; }
.dims { height: 398px; border-bottom: 1px solid #e0e0e0; padding-top: 2px; }
.side-head { display: flex; align-items: center; height: 30px; padding: 0 0 1px 22px; color: #000; }
.side-head h2 { font-size: 16.6px; font-weight: 600; width: 179px; line-height: 22px; }
.side-head i { width: 1px; height: 22px; background: #ccc; margin: 0 8px 0 7px; }
.h-find { margin-left: 7px; }
.dims .cr { margin-left: -1px; }
.field { display: flex; align-items: center; height: 26px; padding-left: 26px; gap: 12px; }
.field small { width: 16px; margin: 0 -2px 0 -2px; font-size: 9px; font-weight: 700; color: #4a86a0; }
.it { font-style: italic; letter-spacing: .62px; }
.it small { font-style: normal; letter-spacing: 0; }
.eq { padding-left: 23px; }
.meas .side-head { padding-bottom: 2px; }

.cards { width: 194px; margin-left: 6px; display: flex; flex-direction: column; gap: 6px; }
.card { background: #fafafa; border: 1px solid #d0d0d0; padding: 7px 7px 0; }
.card h3 { font-size: 14.7px; line-height: 21px; color: #444; }
.pages { height: 70px; }
.filters { height: 92px; }
.marks { height: 301px; }
.mark-type { margin-top: 14px; height: 24px; padding-left: 10px; gap: 6px; font-size: 14.2px; }
.mark-grid { display: grid; grid-template-columns: 54px 56px 54px; grid-auto-rows: 52px; gap: 7px; margin-top: 7px; }
.mark-grid div { border: 1px solid #d0d0d0; display: flex; flex-direction: column; justify-content: space-between; align-items: center; padding: 8px 0 0; font-size: 12.9px; line-height: 20px; }
.encodings { margin-top: 10px; display: flex; flex-direction: column; gap: 3px; }
.encodings div { display: grid; grid-template-columns: 31px 142px; align-items: center; }
.encodings div > svg { justify-self: center; margin-left: 4px; }
.pill { height: 24px; border-radius: 12px; color: #fff; font-weight: 600; font-size: 14.6px; display: flex; align-items: center; justify-content: space-between; padding: 0 14px 0 13px; }
.green { background: #00b180; }
.blue { background: #4996b2; }

.canvas { width: 1452px; margin-left: 6px; display: flex; flex-direction: column; }
.shelf { height: 32px; margin-bottom: 6px; display: flex; align-items: center; background: #fafafa; border: 1px solid #d0d0d0; border-right: 0; }
.shelf-name { width: 159px; align-self: stretch; border-right: 1px solid #d0d0d0; display: flex; align-items: center; gap: 8px; padding-left: 7px; color: #444; }
.shelf .pill { width: 178px; margin-left: 2px; font-size: 14.8px; }
.view { width: 1246px; height: 780px; background: #fff; border: 1px solid #adadad; }
.chart-title { font-size: 25.4px; font-weight: 300; fill: #333; }
.grid { stroke: #f0f0f0; fill: none; }
.bars { stroke: #d3d7db; }
.male { fill: #4e79a7; }
.female { fill: #f28e2b; }
.pct { font-size: 15.8px; fill: #fff; fill-opacity: .86; text-anchor: middle; }
.start { text-anchor: start; }
.axis { font-size: 15.6px; font-weight: 300; fill: #444; text-anchor: middle; }
.right { text-anchor: end; }
.axis-title { font-size: 14.4px; font-weight: 600; fill: #444; }

.showme { position: absolute; left: 1661px; top: 0; width: 256px; height: 683px; background: #fafafa; border: 1px solid #ddd; border-right-color: #b5b5b5; border-bottom-color: #b5b5b5; box-shadow: 2px 2px 3px rgba(0, 0, 0, .3); padding: 17px 16px 0; }
.showme-tab { position: absolute; right: -1px; top: -46px; width: 131px; height: 46px; background: #fafafa; border: 1px solid #ddd; border-bottom: 0; border-right-color: #b5b5b5; box-shadow: 3px 0 3px -1px rgba(0, 0, 0, .3); display: flex; align-items: center; gap: 6px; padding: 0 0 8px 13px; font-size: 16.6px; }
.thumbs { display: grid; grid-template-columns: repeat(3, 69px); grid-auto-rows: 52px; gap: 5px 6px; }
.thumbs svg { width: 69px; height: 52px; background: #fff; border: 1px solid #ddd; }
.thumbs .selected { border: 2px solid #e0683a; }
.tiny { font-size: 15px; fill: #d5d5d5; }
.hint { margin: 18px 0 0 2px; font-size: 14.5px; color: #222; }
.hint p { display: flex; align-items: center; white-space: pre; }
.hint b { font-weight: 700; color: #000; }
.hint .pill { font-size: 14.5px; }
.h-title { height: 27px; }
.h-date { height: 29px; gap: 4px; }
.h-row { height: 26px; font-size: 14px; }
.h-row.last { margin-top: 8px; font-size: 14.8px; }
.hint .blue { width: 113px; }
.hint .green { width: 98px; }

.sheets { height: 38px; background: #e5e5e5; border-top: 1px solid #c8c8c8; border-bottom: 1px solid #d0d0d0; display: flex; color: #666; }
.sheets span { display: flex; align-items: center; border-right: 1px solid #c8c8c8; }
.sheet-source { width: 163px; padding-left: 11px; gap: 5px; font-size: 14.9px; }
.sheet-active { width: 67px; justify-content: center; background: #fafafa; color: #444; font-weight: 600; font-size: 14.5px; }
.sheets .sheet-active { padding-bottom: 1px; }
.sheet-new { width: 32px; justify-content: center; }
.status { height: 25px; background: #eaeaea; display: flex; align-items: center; font-size: 12.93px; padding: 0 0 2px 3px; color: #222; }
.st-marks { width: 76px; }
.st-rows { width: 125px; letter-spacing: -.35px; }
.st-user { margin-left: auto; width: 157px; height: 25px; border-left: 1px solid #ccc; display: flex; align-items: center; padding: 0 0 1px 6px; gap: 8px; margin-bottom: -2px; }
.user-caret { margin: 0 0 0 24px; }
.st-cell { width: 32px; height: 25px; margin-bottom: -2px; border-left: 1px solid #ccc; }
.wide { width: 57px; }
.st-nav { width: 71px; height: 25px; margin-bottom: -2px; border-left: 1px solid #ccc; display: flex; align-items: center; padding: 0 0 1px 8px; }
.st-modes { width: 70px; height: 25px; margin-bottom: -2px; border-left: 1px solid #ccc; display: flex; align-items: center; padding: 0 0 1px 8px; }

.taskbar { position: relative; height: 50px; display: flex; background: linear-gradient(90deg, #060606, #000 55%, #01070c 70%, #020d12 77%, #000 90%); color: #fff; }
.wallpaper { position: absolute; left: 0; top: 0; }
.engraved { font-family: "Liberation Serif", serif; font-size: 50px; fill: #0b0b0b; stroke: #222; stroke-width: 1; }
.big { font-size: 74px; }
.app { position: relative; width: 60px; display: flex; align-items: center; justify-content: center; }
.edge { width: 68px; }
.open { width: 51px; margin-right: 11px; border-bottom: 3px solid #76b9ed; padding-top: 3px; }
.edge + .open { margin-left: 2px; }
.multi { border-image: linear-gradient(90deg, #76b9ed 78%, #5c88b5 78%) 1; border-image-width: 0 0 3px; }
.last { margin-right: 6px; }
.active { width: 61px; margin-right: 6px; background: #363636; }
.tray { position: relative; margin-left: auto; width: 303px; display: flex; align-items: center; }
.chev { margin-left: 27px; }
.vol { margin-left: 11px; }
.lang { margin-left: 12px; width: 29px; font-size: 14px; }
.clock { margin-left: 15px; width: 78px; display: flex; flex-direction: column; align-items: center; font-size: 14.5px; line-height: 23px; }
.notes { position: relative; margin: -6px 0 0 24px; }
.notes span { position: absolute; left: 7px; top: 9px; width: 25px; height: 23px; border: 1px solid #888; border-radius: 12px; background: #2b2b2b; font-size: 14px; font-weight: 600; line-height: 20px; text-align: center; }
.tray::after { content: ""; width: 1px; height: 50px; margin-left: 25px; background: #666; }
```
